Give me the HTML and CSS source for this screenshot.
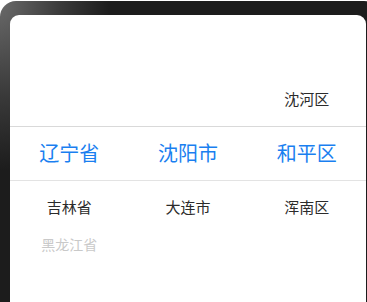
FILE: index.html
```html
<!DOCTYPE html>
<html lang="zh-CN">
<head>
    <meta charset="UTF-8">
    <meta name='viewport' content='width=device-width,initial-scale=1.0,user-scalable=no'>
    <title>地区选择</title>
    <link rel="stylesheet" href="styles.css">
</head>
<body>
<div class="phone">
    <div class="screen">
        <div class="picker">
            <div class="picker-row row-upper">
                <p></p>
                <p></p>
                <p>沈河区</p>
            </div>
            <div class="picker-row row-selected">
                <p>辽宁省</p>
                <p>沈阳市</p>
                <p>和平区</p>
            </div>
            <div class="picker-row row-lower">
                <p>吉林省</p>
                <p>大连市</p>
                <p>浑南区</p>
            </div>
            <div class="picker-row row-faded">
                <p>黑龙江省</p>
                <p></p>
                <p></p>
            </div>
        </div>
    </div>
</div>
</body>
</html>
```

FILE: styles.css
```css
*{
    margin: 0;
    padding: 0;
}
html, body{
    background: #ffffff;
    overflow: hidden;
    height: 100%;
}
body{
    font-family: "Noto Sans CJK SC", "Noto Sans", sans-serif;
}

.phone{
    margin-top: 1px;
    width: 380px;
    height: 301px;
    box-sizing: border-box;
    padding: 14px 0 0 10px;
    border-radius: 16px 16px 0 0;
    background: #1c1c1c;
    background-image: radial-gradient(ellipse 110px 170px at 0 0, #6a6a6a 0%, #3a3a3a 55%, #1c1c1c 100%);
}
.screen{
    width: 356px;
    height: 287px;
    background: #ffffff;
    border-radius: 9px 9px 0 0;
    overflow: hidden;
}

.picker{
    padding-top: 59px;
}
.picker-row{
    display: flex;
    align-items: center;
    box-sizing: border-box;
}
.picker-row p{
    flex: 1;
    text-align: center;
    font-size: 15px;
    color: #2b2b2b;
}
.row-upper{
    height: 52px;
    padding-bottom: 4px;
}
.row-selected{
    height: 55px;
    padding-bottom: 2px;
    border-top: 1px solid #d9d9d9;
    border-bottom: 1px solid #e3e3e3;
}
.row-selected p{
    font-size: 20px;
    color: #1a7ff0;
}
.row-lower{
    height: 54px;
    padding-bottom: 4px;
}
.row-faded{
    height: 18px;
}
.row-faded p{
    font-size: 14px;
    color: #c9c9c9;
}
```
